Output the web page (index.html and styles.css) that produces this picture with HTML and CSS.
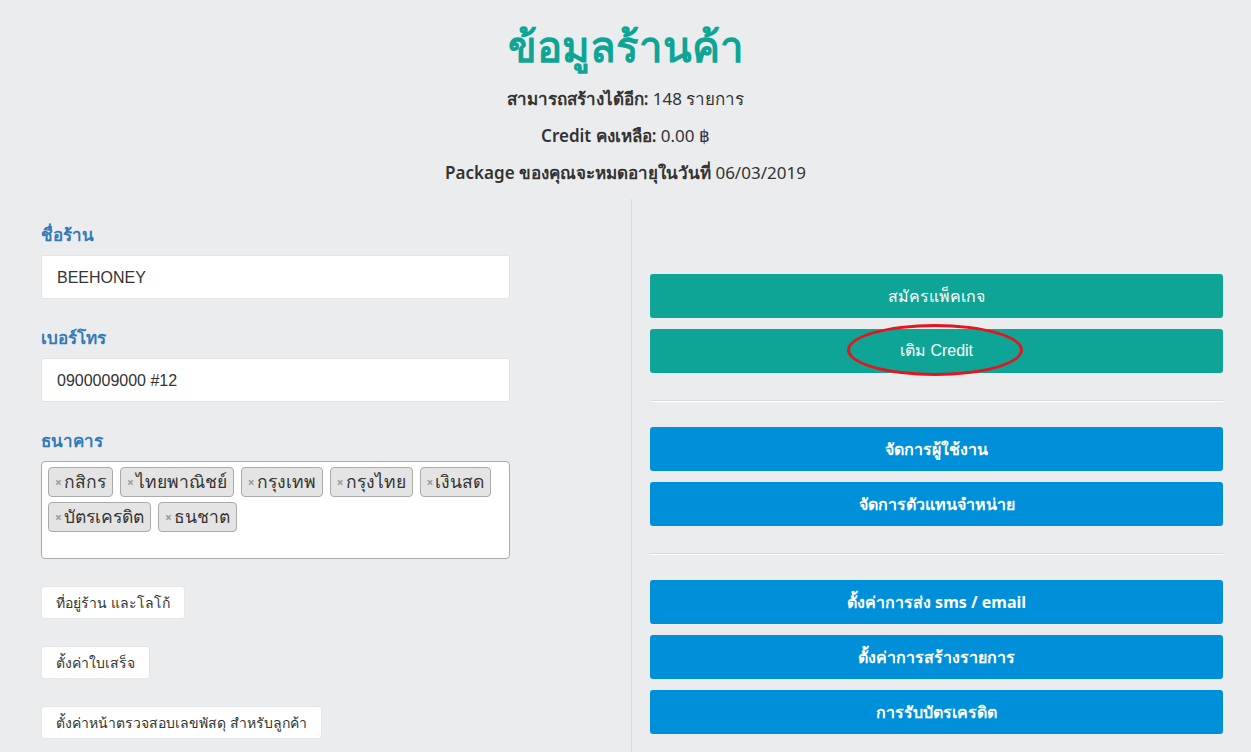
FILE: index.html
```html
<!doctype html>
<html>
<head>
<meta charset="utf-8">
<title>ข้อมูลร้านค้า</title>
<link rel="stylesheet" href="styles.css">
</head>

<body>
<div class="head">
    <h1 class="title">ข้อมูลร้านค้า</h1>
    <p class="info"><b>สามารถสร้างได้อีก:</b> 148 รายการ</p>
    <p class="info"><b>Credit คงเหลือ:</b> 0.00 ฿</p>
    <p class="info"><b>Package ของคุณจะหมดอายุในวันที่</b> 06/03/2019</p>
</div>
<div class="cols">
    <div class="col-left">
        <div class="field">
            <label class="label">ชื่อร้าน</label>
            <div class="input">BEEHONEY</div>
        </div>
        <div class="field">
            <label class="label">เบอร์โทร</label>
            <div class="input">0900009000 #12</div>
        </div>
        <div class="field">
            <label class="label">ธนาคาร</label>
            <ul class="tags">
                <li class="tag"><span class="x">×</span>กสิกร</li>
                <li class="tag"><span class="x">×</span>ไทยพาณิชย์</li>
                <li class="tag"><span class="x">×</span>กรุงเทพ</li>
                <li class="tag"><span class="x">×</span>กรุงไทย</li>
                <li class="tag"><span class="x">×</span>เงินสด</li>
                <li class="tag"><span class="x">×</span>บัตรเครดิต</li>
                <li class="tag"><span class="x">×</span>ธนชาต</li>
            </ul>
        </div>
        <div class="links">
            <a class="btn-white">ที่อยู่ร้าน และโลโก้</a>
            <a class="btn-white">ตั้งค่าใบเสร็จ</a>
            <a class="btn-white">ตั้งค่าหน้าตรวจสอบเลขพัสดุ สำหรับลูกค้า</a>
        </div>
    </div>
    <div class="col-right">
        <div class="group">
            <a class="btn btn-teal">สมัครแพ็คเกจ</a>
            <a class="btn btn-teal circled">เติม Credit<span class="ring"></span></a>
        </div>
        <hr>
        <div class="group">
            <a class="btn btn-blue">จัดการผู้ใช้งาน</a>
            <a class="btn btn-blue">จัดการตัวแทนจำหน่าย</a>
        </div>
        <hr>
        <div class="group">
            <a class="btn btn-blue">ตั้งค่าการส่ง sms / email</a>
            <a class="btn btn-blue">ตั้งค่าการสร้างรายการ</a>
            <a class="btn btn-blue">การรับบัตรเครดิต</a>
        </div>
    </div>
</div>
</body>
</html>
```

FILE: styles.css
```css
body { margin: 0; background: #ebecee; color: #333; font-family: "Noto Sans", "Liberation Sans", sans-serif; }
.head { text-align: center; padding-top: 20px; }
.title { margin: 0 0 8px; font-size: 42px; line-height: 52px; color: #0ea597; font-weight: bold; }
.info { margin: 0; font-size: 17px; line-height: 37px; color: #333; }
.info b { font-weight: 600; }
.cols { display: grid; grid-template-columns: 631px 1fr; margin-top: 8px; }
.col-left { padding: 24px 121px 0 41px; }
.col-right { border-left: 1px solid #dcdcdc; padding: 75px 28px 20px 18px; }
.field { margin-bottom: 27px; }
.label { display: block; color: #337ab7; font-weight: bold; font-size: 17px; line-height: 24px; margin-bottom: 8px; }
.input { background: #fff; border: 1px solid #e3e3e3; border-radius: 2px; height: 44px; line-height: 44px; padding: 0 15px; font-family: "Liberation Sans", Arial, sans-serif; font-size: 16px; box-sizing: border-box; }
.tags { list-style: none; margin: 0; padding: 5px 6px; background: #fff; border: 1px solid #aaa; border-radius: 4px; height: 98px; box-sizing: border-box; display: flex; flex-wrap: wrap; align-content: flex-start; gap: 5px 7px; }
.tag { background: #e4e4e4; border: 1px solid #aaa; border-radius: 4px; padding: 0 6px; font-size: 17.5px; line-height: 26px; color: #333; }
.x { color: #999; font-size: 12px; font-weight: bold; margin-right: 2px; vertical-align: 1px; }
.links { display: flex; flex-direction: column; align-items: flex-start; gap: 27px; padding-top: 0; }
.btn-white { display: block; background: #fff; border: 1px solid #e6e6e6; border-radius: 3px; height: 33px; line-height: 31px; padding: 0 14px; box-sizing: border-box; font-size: 14px; color: #333; }
.group { display: flex; flex-direction: column; gap: 11px; }
.btn { position: relative; display: block; height: 44px; line-height: 44px; border-radius: 3px; text-align: center; color: #fff; font-size: 16px; }
.btn-teal { background: #0ea597; }
.btn-blue { background: #0090d9; font-weight: bold; }
.circled { font-family: "Liberation Sans", Arial, sans-serif; }
.ring { position: absolute; left: 197px; top: -5px; width: 170px; height: 46px; border: 3px solid #e4151f; border-radius: 50%; }
hr { border: 0; border-top: 1px solid #dadada; border-bottom: 1px solid #fff; margin: 27px 0 25px; }
```
